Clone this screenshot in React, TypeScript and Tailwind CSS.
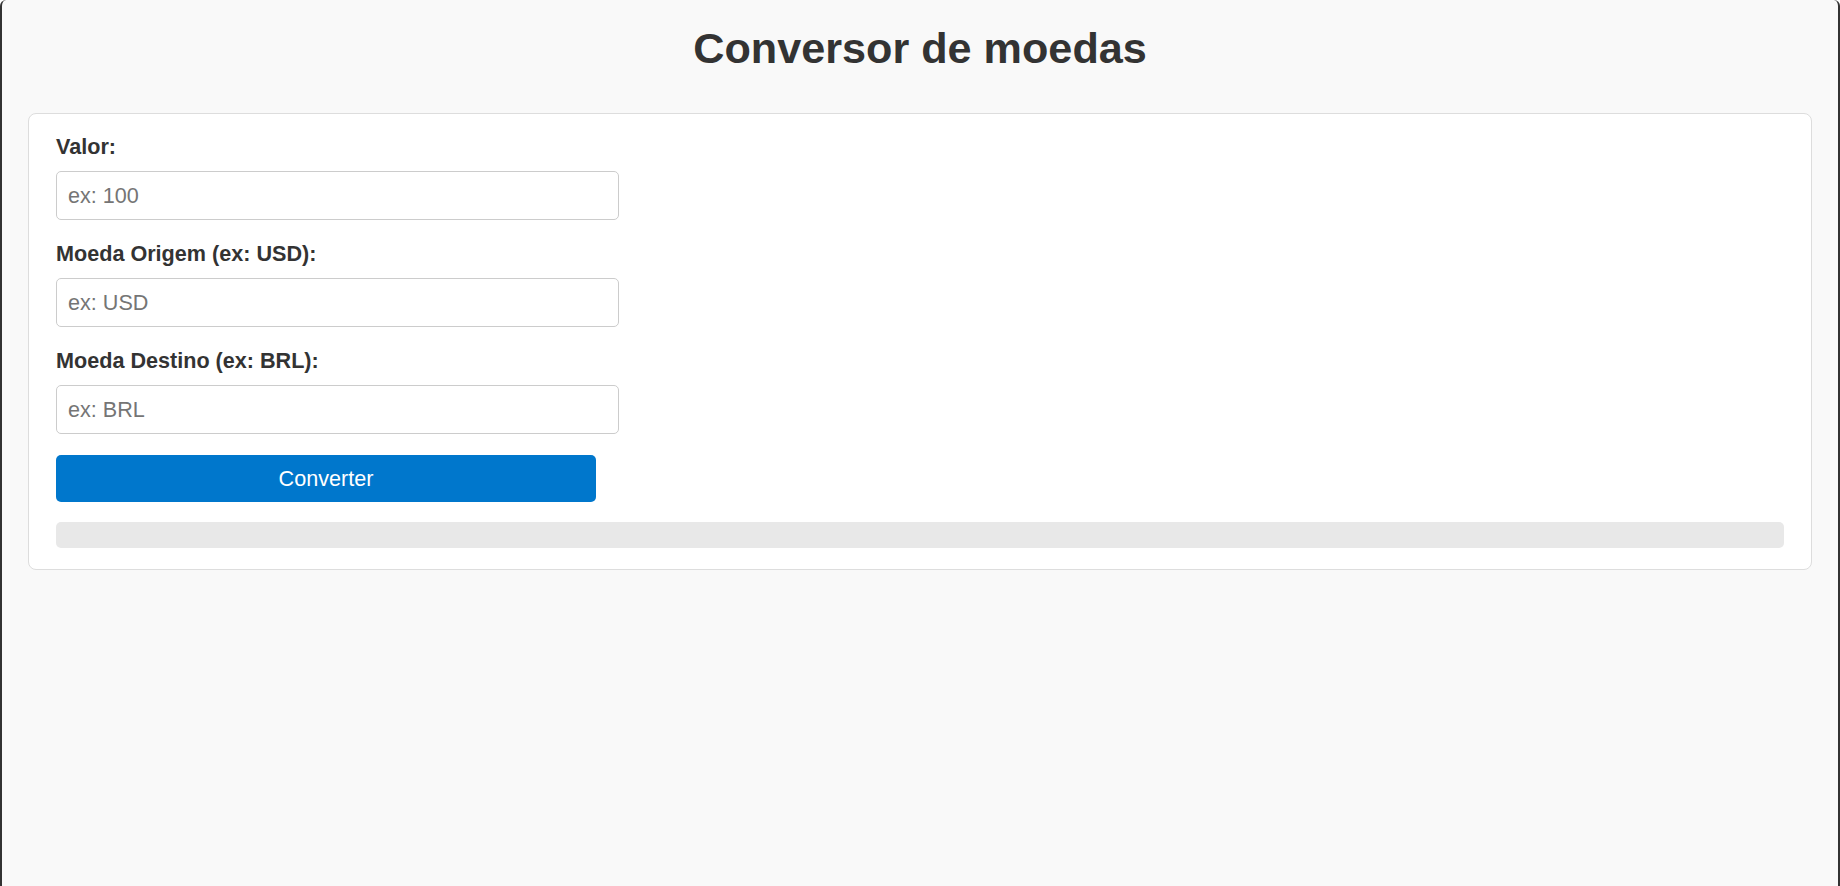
import React from "react";
import { useState } from "react";

const Field: React.FC<{
  label: string;
  placeholder: string;
  value: string;
  onChange: (v: string) => void;
}> = ({ label, placeholder, value, onChange }) => {
  return (
    <div>
      <label className="block text-[21.6px] font-bold leading-[25px] mb-[12px] text-[#333]">
        {label}
      </label>
      <input
        type="text"
        placeholder={placeholder}
        value={value}
        onChange={(e) => onChange(e.target.value)}
        className="block w-[563px] h-[49px] mb-[21px] border border-[#ccc] rounded-[5px] bg-white pl-[11px] pr-[11px] text-[21.6px] text-[#333] placeholder:text-[#757575] outline-none"
      />
    </div>
  );
};

const App: React.FC = () => {
  const [valor, setValor] = useState<string>("");
  const [origem, setOrigem] = useState<string>("");
  const [destino, setDestino] = useState<string>("");

  return (
    <div
      className="min-h-screen bg-[#f9f9f9] border-l-2 border-r-2 border-[#333] rounded-t-[6px] px-[26px] pt-[23px]"
      style={{ fontFamily: '"Liberation Sans", Arial, sans-serif' }}
    >
      <h1 className="text-center text-[43.2px] font-bold leading-[50px] text-[#333] mb-[40px]">
        Conversor de moedas
      </h1>

      <div className="bg-white border border-[#ddd] rounded-[8px] pl-[27px] pr-[27px] pt-[20px] pb-[21px]">
        <Field label="Valor:" placeholder="ex: 100" value={valor} onChange={setValor} />
        <Field
          label="Moeda Origem (ex: USD):"
          placeholder="ex: USD"
          value={origem}
          onChange={setOrigem}
        />
        <Field
          label="Moeda Destino (ex: BRL):"
          placeholder="ex: BRL"
          value={destino}
          onChange={setDestino}
        />
        <button
          type="button"
          className="flex items-center justify-center w-[540px] h-[47px] bg-[#0077cc] text-white text-[21.6px] leading-[25px] rounded-[5px]"
        >
          Converter
        </button>
        <div className="mt-[20px] h-[26px] w-full bg-[#e8e8e8] rounded-[5px]"></div>
      </div>
    </div>
  );
};

export default App;
